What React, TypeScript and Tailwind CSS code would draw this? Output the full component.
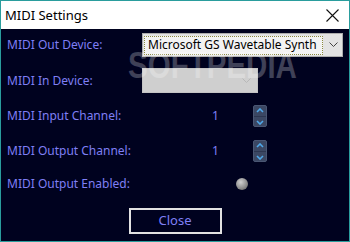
import React from "react";

const font = { fontFamily: '"Noto Sans", "Open Sans", sans-serif' };

function Spinner() {
  return (
    <div className="w-[14px] h-[22px] rounded-[2px] bg-[#3b4763] border border-[#4a5673] flex flex-col items-center justify-center gap-[3px]">
      <svg width="8" height="5" viewBox="0 0 8 5"><path d="M1 4 L4 1 L7 4" stroke="#4fa8ea" strokeWidth="1.6" fill="none" /></svg>
      <div className="w-[12px] h-px bg-[#2c3650]" />
      <svg width="8" height="5" viewBox="0 0 8 5"><path d="M1 1 L4 4 L7 1" stroke="#4fa8ea" strokeWidth="1.6" fill="none" /></svg>
    </div>
  );
}

export default function App() {
  return (
    <div style={font} className="w-[350px] h-[242px] border border-[#2a9d9d] flex flex-col bg-[#00021f] relative overflow-hidden">
      <div className="h-[28px] bg-white flex items-center justify-between pl-[4px] pr-[10px]">
        <span className="text-[13px] text-black leading-none">MIDI Settings</span>
        <svg width="13" height="13" viewBox="0 0 13 13"><path d="M0.5 0.5 L12.5 12.5 M12.5 0.5 L0.5 12.5" stroke="#111" strokeWidth="1.1" /></svg>
      </div>
      <div className="flex-1 flex flex-col text-[12px] text-[#7f7ff5] pl-[6px]">
        <div className="flex items-center h-[24px] mt-[4px]">
          <span className="w-[135px]">MIDI Out Device:</span>
          <div className="w-[201px] h-[24px] bg-[#e3e3e3] border border-[#adadad] flex items-center pl-[1px]">
            <div className="w-[179px] h-[19px] border border-dotted border-[#8a8a40] bg-[#f3f3f3] flex items-center pl-[3px] text-black text-[12px] leading-none whitespace-nowrap overflow-hidden">Microsoft GS Wavetable Synth</div>
            <svg className="ml-[6px]" width="9" height="6" viewBox="0 0 9 6"><path d="M0.5 0.5 L4.5 4.5 L8.5 0.5" stroke="#444" strokeWidth="1" fill="none" /></svg>
          </div>
        </div>
        <div className="flex items-center h-[25px] mt-[11px]">
          <span className="w-[135px]">MIDI In Device:</span>
          <div className="w-[116px] h-[25px] bg-[#cfcfcf] border border-[#c4c4c4] flex items-center justify-end pr-[6px]">
            <svg width="9" height="6" viewBox="0 0 9 6"><path d="M0.5 0.5 L4.5 4.5 L8.5 0.5" stroke="#b8b8b8" strokeWidth="1" fill="none" /></svg>
          </div>
        </div>
        <div className="flex items-center h-[22px] mt-[12px]">
          <span className="w-[205px]">MIDI Input Channel:</span>
          <span className="w-[41px]">1</span>
          <Spinner />
        </div>
        <div className="flex items-center h-[22px] mt-[13px]">
          <span className="w-[205px]">MIDI Output Channel:</span>
          <span className="w-[41px]">1</span>
          <Spinner />
        </div>
        <div className="flex items-center h-[20px] mt-[12px]">
          <span className="w-[229px]">MIDI Output Enabled:</span>
          <div className="w-[12px] h-[12px] rounded-full bg-[radial-gradient(circle_at_40%_35%,#d0d0d0,#8a8a8a_60%,#555)]" />
        </div>
        <div className="flex justify-center mt-[14px] pr-[6px]">
          <div className="w-[93px] h-[26px] border-[2px] border-[#e2e2e2] bg-[#00021f] flex items-center justify-center text-[13px] text-[#7f7ff5]">Close</div>
        </div>
      </div>
      <div className="absolute left-[127px] top-[47px] text-[36px] font-bold text-white/25 leading-none origin-left scale-x-[0.82] pointer-events-none" style={{ fontFamily: '"Liberation Sans", sans-serif' }}>SOFTPEDIA</div>
    </div>
  );
}
